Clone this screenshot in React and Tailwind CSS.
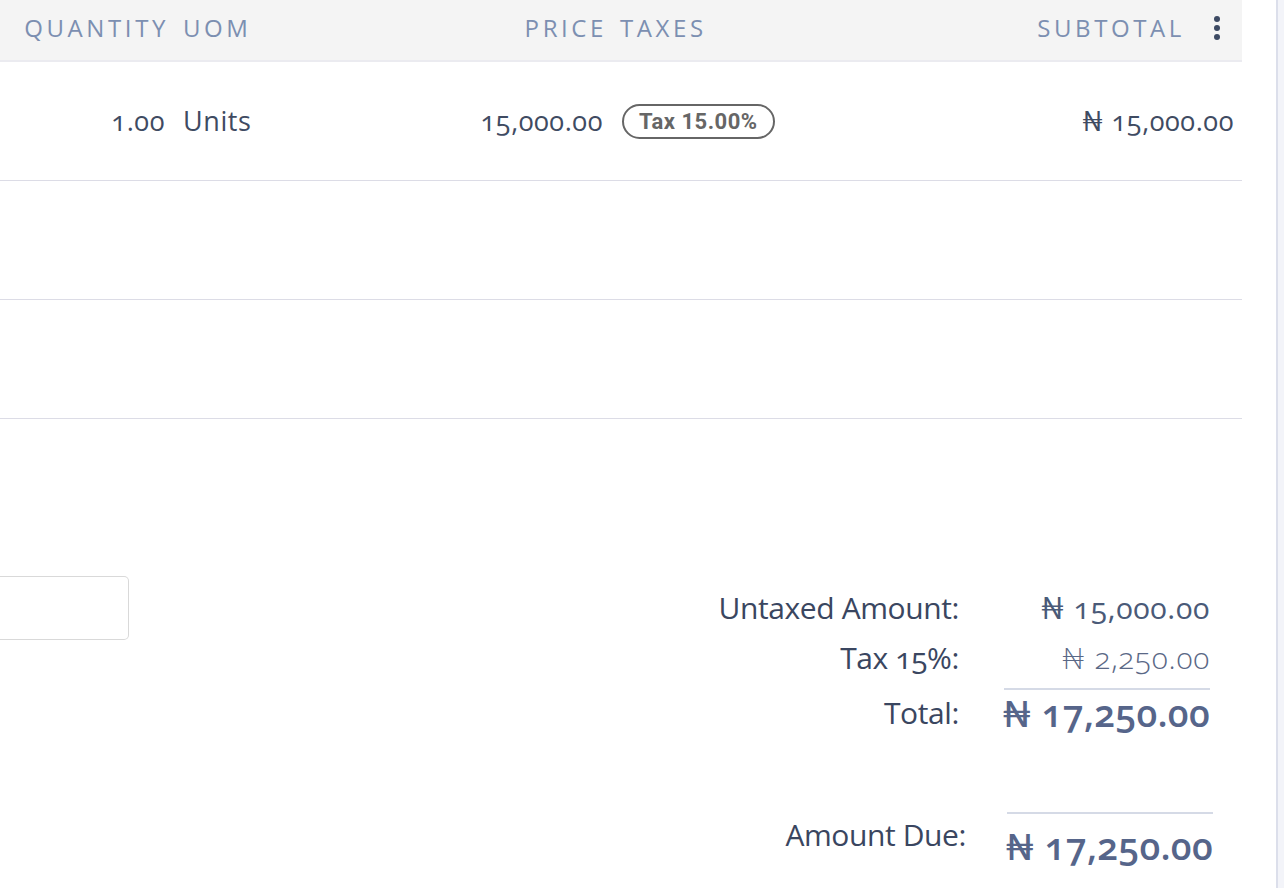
import React from "react";

const F = { fontFamily: "'Open Sans', Lato, sans-serif", fontFeatureSettings: "'onum'" };
const R = { fontFamily: "Roboto, sans-serif", fontFeatureSettings: "normal" };

export default function App() {
  return (
    <div className="w-[1284px] h-[888px] bg-white flex overflow-hidden" style={F}>
      <div className="w-[1242px] flex flex-col">
        {/* header */}
        <div className="h-[62px] bg-[#f4f4f4] border-b-2 border-[#ebebf0] flex items-center pb-[4px] text-[24px] tracking-[3.6px] text-[#7c8fb1] uppercase">
          <div className="w-[174px] text-right pr-[5px]">Quantity</div>
          <div className="w-[296px] pl-[9px]">UoM</div>
          <div className="w-[142px] text-right pr-[5px]">Price</div>
          <div className="w-[288px] pl-[8px]">Taxes</div>
          <div className="w-[290px] text-right pr-[5px]">Subtotal</div>
          <div className="flex-1 flex justify-center pl-[2px]">
            <svg width="8" height="24" viewBox="0 0 8 24">
              <circle cx="4" cy="3" r="3" fill="#3d4a63" />
              <circle cx="4" cy="12" r="3" fill="#3d4a63" />
              <circle cx="4" cy="21" r="3" fill="#3d4a63" />
            </svg>
          </div>
        </div>
        {/* row 1 */}
        <div className="h-[119px] border-b border-[#dcdce6] flex items-center text-[27px] tracking-[0.6px] text-[#3f4b62]">
          <div className="w-[174px] text-right pr-[9px]">1.00</div>
          <div className="w-[296px] pl-[9px]">Units</div>
          <div className="w-[142px] text-right pr-[9px]">15,000.00</div>
          <div className="w-[288px] pl-[10px] flex">
            <span className="border-2 border-[#666] rounded-full px-[15px] h-[35px] flex items-center text-[22px] tracking-[0.5px] font-bold text-[#666]" style={R}>Tax 15.00%</span>
          </div>
          <div className="flex-1 text-right pr-[8px]">₦ 15,000.00</div>
        </div>
        <div className="h-[119px] border-b border-[#dcdce6]" />
        <div className="h-[119px] border-b border-[#dcdce6]" />
        {/* bottom section */}
        <div className="flex pt-[157px]">
          <div className="w-[129px] h-[64px] border border-l-0 border-[#d9d9d9] rounded-r-[5px]" />
          <div className="flex-1 flex flex-col items-end pr-[32px] pt-[7px]">
            <div className="grid grid-cols-[auto_206px] gap-x-[45px] items-center text-[#3a4660]">
              <div className="text-right text-[30px] h-[50px] leading-[50px] tracking-[-0.4px]">Untaxed Amount:</div>
              <div className="text-right text-[30px] h-[50px] leading-[50px] tracking-[0.7px] text-[#4a5a78]">₦ 15,000.00</div>
              <div className="text-right text-[30px] h-[50px] leading-[50px] tracking-[-0.4px]">Tax 15%:</div>
              <div className="text-right text-[30px] h-[50px] leading-[50px] tracking-[0.7px] text-[#5a6886] font-light">₦ 2,250.00</div>
              <div className="h-[7px]" />
              <div className="h-[7px] flex flex-col justify-end"><div className="border-t-2 border-[#d5dae6]" /></div>
              <div className="text-right text-[30px] h-[46px] leading-[46px] tracking-[-0.4px]">Total:</div>
              <div className="flex justify-end whitespace-nowrap text-[37px] h-[46px] leading-[46px] text-[#56658a] font-semibold tracking-[0.3px]">₦ 17,250.00</div>
            </div>
            <div className="h-[76px]" />
            <div className="grid grid-cols-[auto_206px] gap-x-[41px] items-start text-[#3a4660] mr-[-3px]">
              <div />
              <div className="border-t-2 border-[#d5dae6]" />
              <div className="text-right text-[30px] h-[64px] leading-[42px] tracking-[-0.4px]">Amount Due:</div>
              <div className="flex justify-end whitespace-nowrap text-[37px] h-[64px] leading-[64px] text-[#56658a] font-semibold tracking-[0.3px]">₦ 17,250.00</div>
            </div>
          </div>
        </div>
      </div>
      <div className="flex-1" />
      <div className="w-[8px] h-full border-l-2 border-[#dcdfeb] bg-[#f3f4f9]" />
    </div>
  );
}
